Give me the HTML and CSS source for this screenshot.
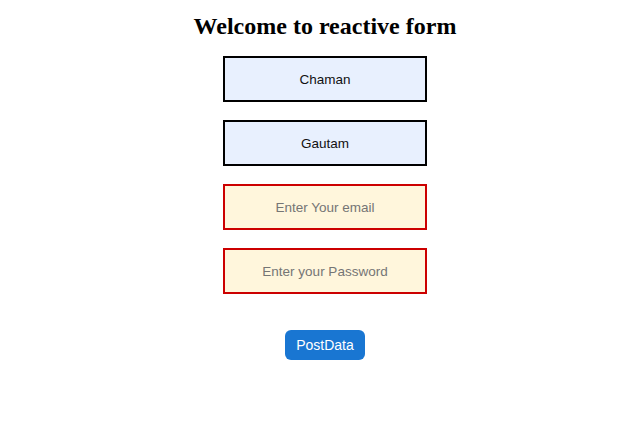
FILE: index.html
```html
<!DOCTYPE html>
<html>
<head>
<meta charset="utf-8">
<link rel="stylesheet" href="styles.css">
</head>
<body>
<div class="page">
  <h2 class="title">Welcome to reactive form</h2>
  <form class="form">
    <div class="fields">
      <input class="field filled" type="text" value="Chaman">
      <input class="field filled" type="text" value="Gautam">
      <input class="field invalid" type="email" placeholder="Enter Your email">
      <input class="field invalid" type="password" placeholder="Enter your Password">
    </div>
    <button class="submit" type="button">PostData</button>
  </form>
</div>
</body>
</html>
```
FILE: styles.css
```css
html, body {
  margin: 0;
  background: #ffffff;
}
.page {
  display: flex;
  flex-direction: column;
  align-items: center;
  padding: 12px 0 0 28px;
}
.title {
  margin: 0;
  font-family: "Liberation Serif", "Times New Roman", serif;
  font-size: 24px;
  font-weight: bold;
  line-height: 28px;
  color: #000;
}
.form {
  display: flex;
  flex-direction: column;
  align-items: center;
  margin-top: 16px;
}
.fields {
  display: flex;
  flex-direction: column;
  gap: 18px;
}
.field {
  box-sizing: border-box;
  width: 204px;
  height: 46px;
  margin: 0;
  padding: 0 8px;
  border: 2px solid #000;
  text-align: center;
  font-family: "Liberation Sans", Arial, sans-serif;
  font-size: 13.5px;
  color: #111;
  outline: none;
}
.filled {
  background: #e8f0fe;
}
.invalid {
  background: #fff6dc;
  border-color: #cc0000;
}
.field::placeholder {
  color: #757575;
}
.submit {
  margin-top: 36px;
  width: 80px;
  height: 30px;
  border: none;
  border-radius: 6px;
  background: #1976d2;
  color: #fff;
  font-family: "Liberation Sans", Arial, sans-serif;
  font-size: 14px;
  padding: 0;
}
```
